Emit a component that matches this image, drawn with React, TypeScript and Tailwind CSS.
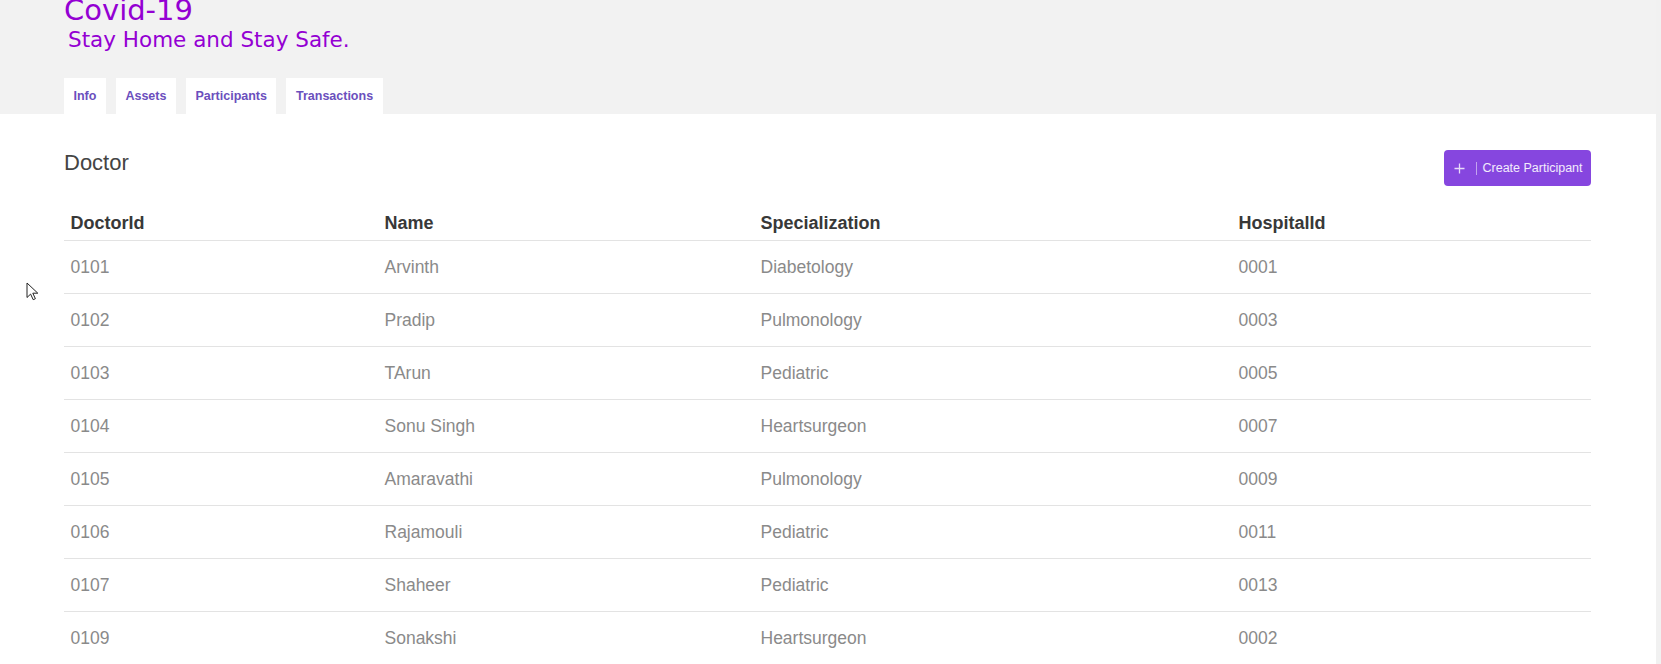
const TABS = ['Info', 'Assets', 'Participants', 'Transactions'];

const COLUMNS = [
  { key: 'id', label: 'DoctorId', width: 'w-[314px]' },
  { key: 'name', label: 'Name', width: 'w-[376px]' },
  { key: 'spec', label: 'Specialization', width: 'w-[478px]' },
  { key: 'hospital', label: 'HospitalId', width: '' },
] as const;

const DOCTORS = [
  { id: '0101', name: 'Arvinth', spec: 'Diabetology', hospital: '0001' },
  { id: '0102', name: 'Pradip', spec: 'Pulmonology', hospital: '0003' },
  { id: '0103', name: 'TArun', spec: 'Pediatric', hospital: '0005' },
  { id: '0104', name: 'Sonu Singh', spec: 'Heartsurgeon', hospital: '0007' },
  { id: '0105', name: 'Amaravathi', spec: 'Pulmonology', hospital: '0009' },
  { id: '0106', name: 'Rajamouli', spec: 'Pediatric', hospital: '0011' },
  { id: '0107', name: 'Shaheer', spec: 'Pediatric', hospital: '0013' },
  { id: '0109', name: 'Sonakshi', spec: 'Heartsurgeon', hospital: '0002' },
];

function Header() {
  return (
    <header className="bg-[#f2f2f2] h-[114px] flex flex-col">
      <h1 className="ml-[64px] font-['DejaVu_Sans',sans-serif] text-[29px] leading-[20px] text-[#9400d3]">
        Covid-19
      </h1>
      <p className="ml-[68px] mt-[7px] font-['DejaVu_Sans',sans-serif] text-[21.5px] leading-[26px] text-[#9400d3]">
        Stay Home and Stay Safe.
      </p>
      <nav className="mt-auto ml-[64px] flex gap-[10px]">
        {TABS.map((tab) => (
          <a
            key={tab}
            href="#"
            className="h-[36px] pt-[1px] px-[9.5px] flex items-center bg-white font-['Liberation_Sans',Arial,sans-serif] font-bold text-[12.5px] text-[#6b4fbd]"
          >
            {tab}
          </a>
        ))}
      </nav>
    </header>
  );
}

function CreateButton() {
  return (
    <button className="h-[36px] w-[147px] flex items-center rounded-[4px] bg-[#8646df] pl-[9.5px] font-['Liberation_Sans',Arial,sans-serif] text-[12.5px] text-white/90">
      <svg width="11" height="11" viewBox="0 0 11 11" className="shrink-0">
        <path d="M5.5 0.5v10M0.5 5.5h10" stroke="rgba(255,255,255,0.8)" strokeWidth="1.3" />
      </svg>
      <span className="ml-[11px] w-px h-[13px] bg-white/50" />
      <span className="ml-[6px] whitespace-nowrap">Create Participant</span>
    </button>
  );
}

function DoctorTable() {
  return (
    <table className="mt-[18px] w-full table-fixed font-['Liberation_Sans',Arial,sans-serif]">
      <thead>
        <tr className="border-b border-[#e3e3e3]">
          {COLUMNS.map((col) => (
            <th
              key={col.key}
              className={`${col.width} pl-[6.5px] pt-[8px] pb-[6px] text-left text-[18px] leading-[22px] font-bold text-[#383838]`}
            >
              {col.label}
            </th>
          ))}
        </tr>
      </thead>
      <tbody>
        {DOCTORS.map((doc) => (
          <tr key={doc.id} className="border-b border-[#e3e3e3]">
            {COLUMNS.map((col) => (
              <td key={col.key} className="h-[53px] pl-[6.5px] text-[17.5px] text-[#8a8a8a]">
                {doc[col.key]}
              </td>
            ))}
          </tr>
        ))}
      </tbody>
    </table>
  );
}

function Cursor() {
  return (
    <svg
      width="13"
      height="19"
      viewBox="0 0 13 19"
      className="absolute left-[26px] top-[282px]"
    >
      <path d="M1 1v14.5l3.6-3.4 2.6 5.6 2.2-1-2.6-5.5h5z" fill="white" stroke="#222" strokeWidth="1" strokeLinejoin="round" />
    </svg>
  );
}

export default function App() {
  return (
    <div className="flex h-[664px] overflow-hidden bg-[#f1f1f1]">
      <div className="relative w-[1656px] shrink-0 bg-white">
        <Header />
        <main className="px-[64px] pr-[65px] pt-[36px]">
          <div className="flex items-start justify-between">
            <h2 className="font-['Liberation_Sans',Arial,sans-serif] text-[22px] leading-[26px] text-[#444]">
              Doctor
            </h2>
            <CreateButton />
          </div>
          <DoctorTable />
        </main>
        <Cursor />
      </div>
      <div className="flex-1" />
    </div>
  );
}
